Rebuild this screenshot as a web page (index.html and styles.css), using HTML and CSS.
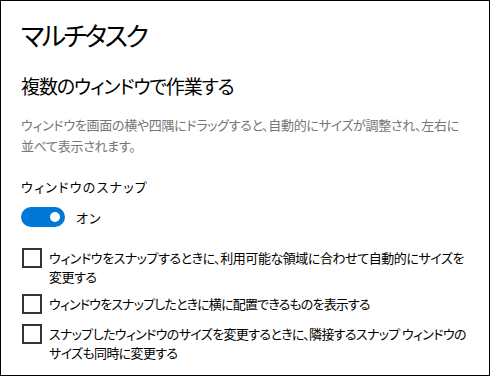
FILE: index.html
```html
<!DOCTYPE html>
<html lang="ja">
<head>
<meta charset="utf-8">
<link rel="stylesheet" href="styles.css">
</head>
<body>
<div class="window">
  <h1 class="title">マルチタスク</h1>
  <h2 class="subtitle">複数のウィンドウで作業する</h2>
  <p class="desc">ウィンドウを画面の横や四隅にドラッグすると、自動的にサイズが調整され、左右に<br>並べて表示されます。</p>
  <div class="label">ウィンドウのスナップ</div>
  <div class="toggle-row">
    <span class="toggle"><span class="knob"></span></span>
    <span class="toggle-text">オン</span>
  </div>
  <div class="checks">
    <div class="check">
      <span class="box"></span>
      <span class="check-text">ウィンドウをスナップするときに、利用可能な領域に合わせて自動的にサイズを<br>変更する</span>
    </div>
    <div class="check">
      <span class="box"></span>
      <span class="check-text check-text-tight">ウィンドウをスナップしたときに横に配置できるものを表示する</span>
    </div>
    <div class="check">
      <span class="box"></span>
      <span class="check-text check-text-mid">スナップしたウィンドウのサイズを変更するときに、隣接するスナップ ウィンドウの<br>サイズも同時に変更する</span>
    </div>
  </div>
</div>
</body>
</html>
```
FILE: styles.css
```css
html, body {
  margin: 0;
  padding: 0;
  background: #fff;
}
body {
  font-family: "Noto Sans CJK JP", "Noto Sans", sans-serif;
  font-feature-settings: "palt";
  color: #000;
}
.window {
  box-sizing: border-box;
  width: 490px;
  height: 376px;
  border: 1px solid #000;
  padding: 0 0 0 20px;
  overflow: hidden;
}
.title {
  margin: 16px 0 0;
  font-size: 26px;
  font-weight: 400;
  line-height: 36px;
  letter-spacing: -2.6px;
}
.subtitle {
  margin: 20px 0 0;
  font-size: 19px;
  font-weight: 400;
  line-height: 26px;
  letter-spacing: -1.1px;
}
.desc {
  margin: 15px 0 0;
  font-size: 13px;
  line-height: 21px;
  color: #767676;
  letter-spacing: -0.3px;
  white-space: nowrap;
}
.label {
  margin: 21px 0 0;
  font-size: 13px;
  line-height: 20px;
  letter-spacing: 1.3px;
}
.toggle-row {
  display: flex;
  align-items: center;
  margin-top: 10px;
  height: 20px;
}
.toggle {
  box-sizing: border-box;
  width: 44px;
  height: 20px;
  border-radius: 10px;
  background: #0078d7;
  display: flex;
  align-items: center;
  justify-content: flex-end;
  padding-right: 5px;
}
.knob {
  width: 10px;
  height: 10px;
  border-radius: 50%;
  background: #fff;
}
.toggle-text {
  margin-left: 11px;
  font-size: 13px;
  letter-spacing: 1px;
}
.checks {
  margin-top: 21px;
  display: flex;
  flex-direction: column;
  gap: 8px;
}
.check {
  display: flex;
  align-items: flex-start;
  min-height: 22px;
}
.box {
  box-sizing: border-box;
  flex: none;
  width: 20px;
  height: 20px;
  border: 2px solid #333;
  margin-left: 1px;
}
.check-text {
  margin-left: 7px;
  font-size: 13px;
  line-height: 19px;
  letter-spacing: -0.45px;
  white-space: nowrap;
}
.check-text-tight {
  letter-spacing: -0.83px;
}
.check-text-mid {
  letter-spacing: -0.65px;
}
```
